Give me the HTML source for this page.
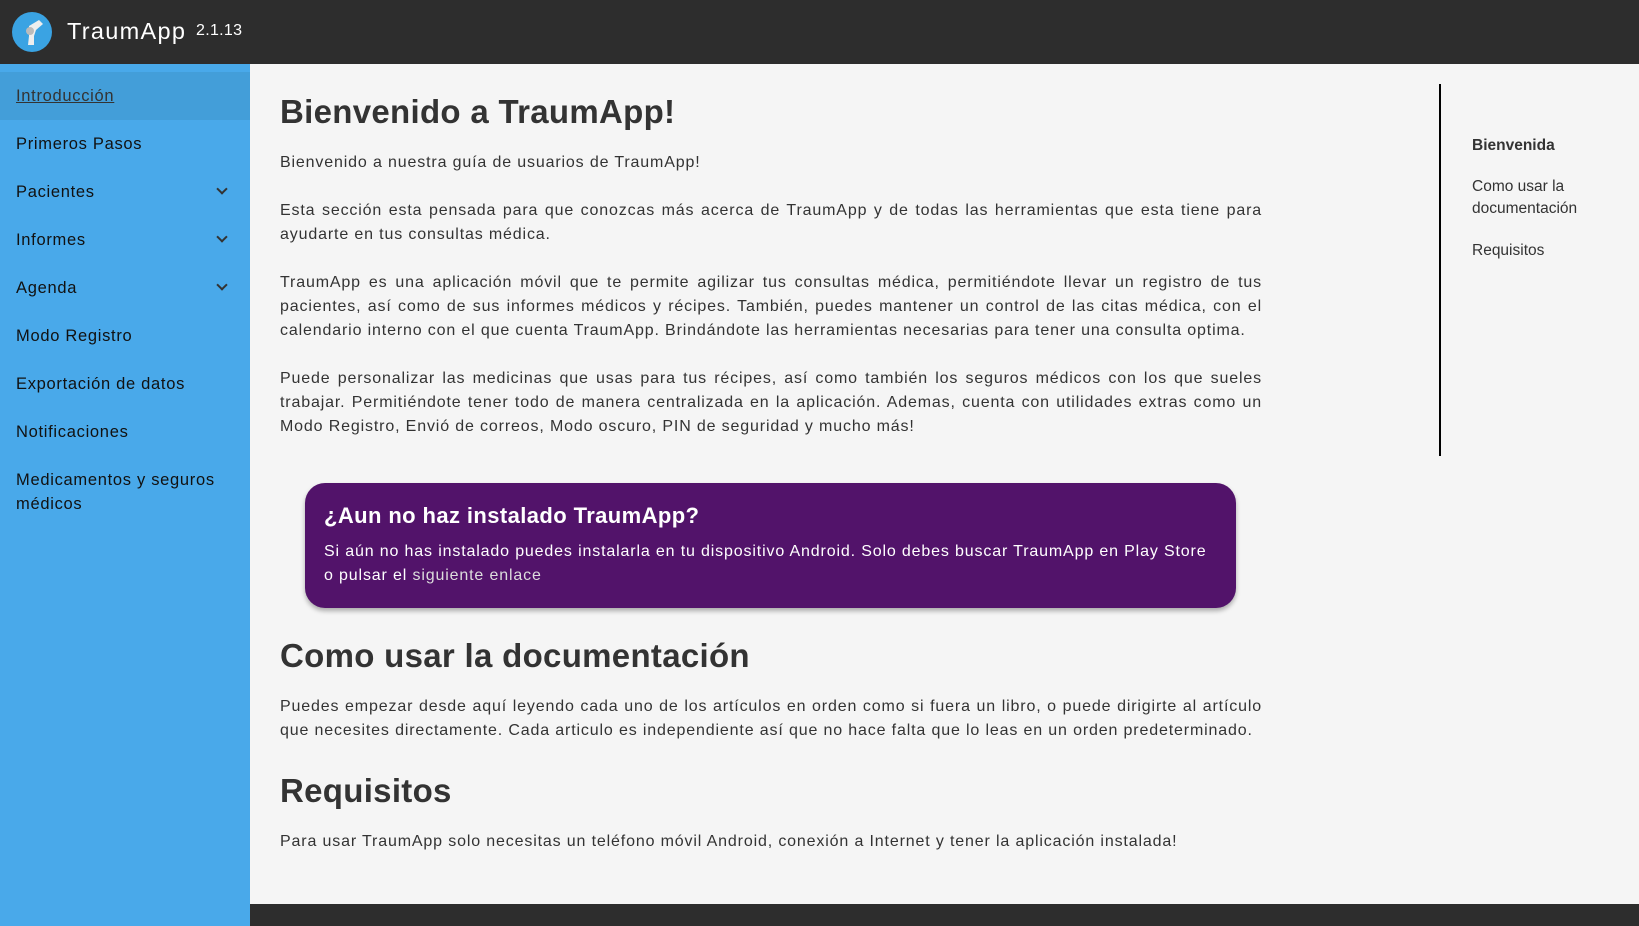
<!DOCTYPE html>
<html><head><meta charset="utf-8"><style>
*{margin:0;padding:0;box-sizing:border-box}
body{width:1639px;height:926px;overflow:hidden;background:#f5f5f5;font-family:"Liberation Sans",sans-serif;color:#333;position:relative}
.hdr{position:absolute;left:0;top:0;width:1639px;height:64px;background:#2d2d2d;color:#fff}
.logo{position:absolute;left:12px;top:12px;width:40px;height:40px;border-radius:50%;background:#3aa3e3}
.hdr .t{position:absolute;left:67px;top:18px;font-size:23.5px;letter-spacing:1.3px}
.hdr .v{position:absolute;left:196px;top:22px;font-size:16px;letter-spacing:0.3px}
.side{position:absolute;left:0;top:64px;width:250px;height:862px;background:#49a9ea}
.side div{position:absolute;left:16px;font-size:16.5px;color:#111;line-height:24px;letter-spacing:0.7px}
.side .act{left:0;width:250px;top:8px;height:48px;background:#439ed9}
.chev{position:absolute;left:218px;width:8px;height:8px;border-right:2px solid #333;border-bottom:2px solid #333;transform:rotate(45deg)}
.main{position:absolute;left:280px;width:982px;font-size:16px;line-height:24px;text-align:justify;color:#333;letter-spacing:0.85px}
h1,h2{position:absolute;left:280px;font-weight:bold;font-size:33px;color:#333;letter-spacing:0.3px}
.toc{position:absolute;left:1472px;font-size:15.5px;color:#333;line-height:22px}
.call{position:absolute;left:305px;top:483px;width:931px;height:125px;background:#52136a;border-radius:20px;box-shadow:0 3px 5px rgba(0,0,0,.3);color:#fff}
.foot{position:absolute;left:250px;top:904px;width:1389px;height:22px;background:#2d2d2d}
</style></head><body>
<div class="hdr"><div class="logo"><svg width="40" height="40" viewBox="0 0 40 40"><path d="M17 14 L27 8 L31 12 L24 18 L22 24 L22 33 L16 33 L17 24 Z" fill="#eee"/><circle cx="18" cy="19" r="4" fill="#bbb"/></svg></div><div class="t">TraumApp</div><div class="v">2.1.13</div></div>
<div class="side">
<div class="act"></div>
<div style="top:20px;text-decoration:underline;color:#333">Introducción</div>
<div style="top:68px">Primeros Pasos</div>
<div style="top:116px">Pacientes</div><span class="chev" style="top:121px"></span>
<div style="top:164px">Informes</div><span class="chev" style="top:169px"></span>
<div style="top:212px">Agenda</div><span class="chev" style="top:217px"></span>
<div style="top:260px">Modo Registro</div>
<div style="top:308px">Exportación de datos</div>
<div style="top:356px">Notificaciones</div>
<div style="top:404px">Medicamentos y seguros<br>médicos</div>
</div>
<h1 style="top:93px">Bienvenido a TraumApp!</h1>
<div class="main" style="top:151px">Bienvenido a nuestra guía de usuarios de TraumApp!</div>
<div class="main" style="top:199px">Esta sección esta pensada para que conozcas más acerca de TraumApp y de todas las herramientas que esta tiene para ayudarte en tus consultas médica.</div>
<div class="main" style="top:271px">TraumApp es una aplicación móvil que te permite agilizar tus consultas médica, permitiéndote llevar un registro de tus pacientes, así como de sus informes médicos y récipes. También, puedes mantener un control de las citas médica, con el calendario interno con el que cuenta TraumApp. Brindándote las herramientas necesarias para tener una consulta optima.</div>
<div class="main" style="top:367px">Puede personalizar las medicinas que usas para tus récipes, así como también los seguros médicos con los que sueles trabajar. Permitiéndote tener todo de manera centralizada en la aplicación. Ademas, cuenta con utilidades extras como un Modo Registro, Envió de correos, Modo oscuro, PIN de seguridad y mucho más!</div>
<div class="call"><div style="position:absolute;left:19px;top:20px;font-size:22px;font-weight:bold;letter-spacing:0.4px">¿Aun no haz instalado TraumApp?</div><div style="position:absolute;left:19px;top:57px;width:900px;white-space:nowrap;font-size:16px;line-height:24px;letter-spacing:0.85px">Si aún no has instalado puedes instalarla en tu dispositivo Android. Solo debes buscar TraumApp en Play Store<br>o pulsar el <span style="color:#ddd">siguiente enlace</span></div></div>
<h2 style="top:637px">Como usar la documentación</h2>
<div class="main" style="top:695px">Puedes empezar desde aquí leyendo cada uno de los artículos en orden como si fuera un libro, o puede dirigirte al artículo que necesites directamente. Cada articulo es independiente así que no hace falta que lo leas en un orden predeterminado.</div>
<h2 style="top:772px">Requisitos</h2>
<div class="main" style="top:830px">Para usar TraumApp solo necesitas un teléfono móvil Android, conexión a Internet y tener la aplicación instalada!</div>
<div style="position:absolute;left:1439px;top:84px;width:2px;height:372px;background:#000"></div>
<div class="toc" style="top:135px;font-weight:bold">Bienvenida</div>
<div class="toc" style="top:176px">Como usar la<br>documentación</div>
<div class="toc" style="top:240px">Requisitos</div>
<div class="foot"></div>
</body></html>
